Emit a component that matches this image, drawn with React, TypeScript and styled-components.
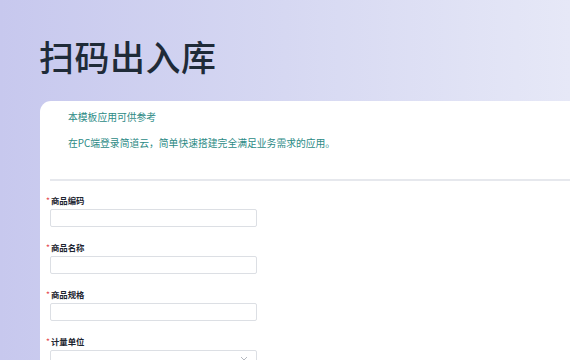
import React from "react";
import styled, { createGlobalStyle } from "styled-components";

const Global = createGlobalStyle`
  html, body { margin: 0; padding: 0; }
  body {
    width: 570px;
    height: 360px;
    overflow: hidden;
    font-family: "Noto Sans CJK SC", "Noto Sans", sans-serif;
  }
`;

const Page = styled.div`
  width: 570px;
  height: 360px;
  overflow: hidden;
  background: linear-gradient(90deg, #c7c8ee 0%, #d6d8f2 50%, #e6e8f7 100%);
  display: flex;
  flex-direction: column;
`;

const Header = styled.div`
  flex-shrink: 0;
  height: 101px;
  padding-left: 39px;
  display: flex;
  align-items: flex-start;
  box-sizing: border-box;
  padding-top: 35px;
`;

const Title = styled.h1`
  margin: 0;
  font-size: 35px;
  line-height: 42px;
  font-weight: 500;
  color: #1f2b38;
  letter-spacing: 0.5px;
`;

const Card = styled.div`
  flex: 1 0 auto;
  margin-left: 40px;
  background: #ffffff;
  border-top-left-radius: 11px;
  display: flex;
  flex-direction: column;
`;

const Intro = styled.div`
  padding: 10px 0 0 28px;
  display: flex;
  flex-direction: column;
  gap: 14px;
`;

const Para = styled.p`
  margin: 0;
  font-size: 9.8px;
  line-height: 12px;
  color: #2c8a85;
`;

const Divider = styled.div`
  margin: 30px 0 0 10px;
  height: 2px;
  background: #e6e8ed;
`;

const Form = styled.div`
  padding: 14px 0 0 10px;
  display: flex;
  flex-direction: column;
  gap: 15px;
`;

const Field = styled.div`
  display: flex;
  flex-direction: column;
  gap: 4px;
`;

const Label = styled.div`
  font-size: 8.4px;
  line-height: 10px;
  font-weight: 700;
  color: #1d2530;
`;

const Star = styled.span`
  color: #e5484d;
  margin-left: -4px;
  margin-right: 1px;
  font-weight: 400;
`;

const Input = styled.div`
  position: relative;
  width: 207px;
  height: 18px;
  box-sizing: border-box;
  border: 1px solid #dcdfe4;
  border-radius: 2px;
  background: #fff;
`;

const Chevron = styled.svg`
  position: absolute;
  right: 8px;
  top: 5px;
`;

const fields = ["商品编码", "商品名称", "商品规格", "计量单位"];

export default function App() {
  return (
    <Page>
      <Global />
      <Header>
        <Title>扫码出入库</Title>
      </Header>
      <Card>
        <Intro>
          <Para>本模板应用可供参考</Para>
          <Para>在PC端登录简道云，简单快速搭建完全满足业务需求的应用。</Para>
        </Intro>
        <Divider />
        <Form>
          {fields.map((f, i) => (
            <Field key={f}>
              <Label>
                <Star>*</Star>
                {f}
              </Label>
              <Input>
                {i === 3 && (
                  <Chevron width="8" height="5" viewBox="0 0 8 5">
                    <path d="M1 1 L4 4 L7 1" fill="none" stroke="#b5b9c0" strokeWidth="1" />
                  </Chevron>
                )}
              </Input>
            </Field>
          ))}
        </Form>
      </Card>
    </Page>
  );
}
